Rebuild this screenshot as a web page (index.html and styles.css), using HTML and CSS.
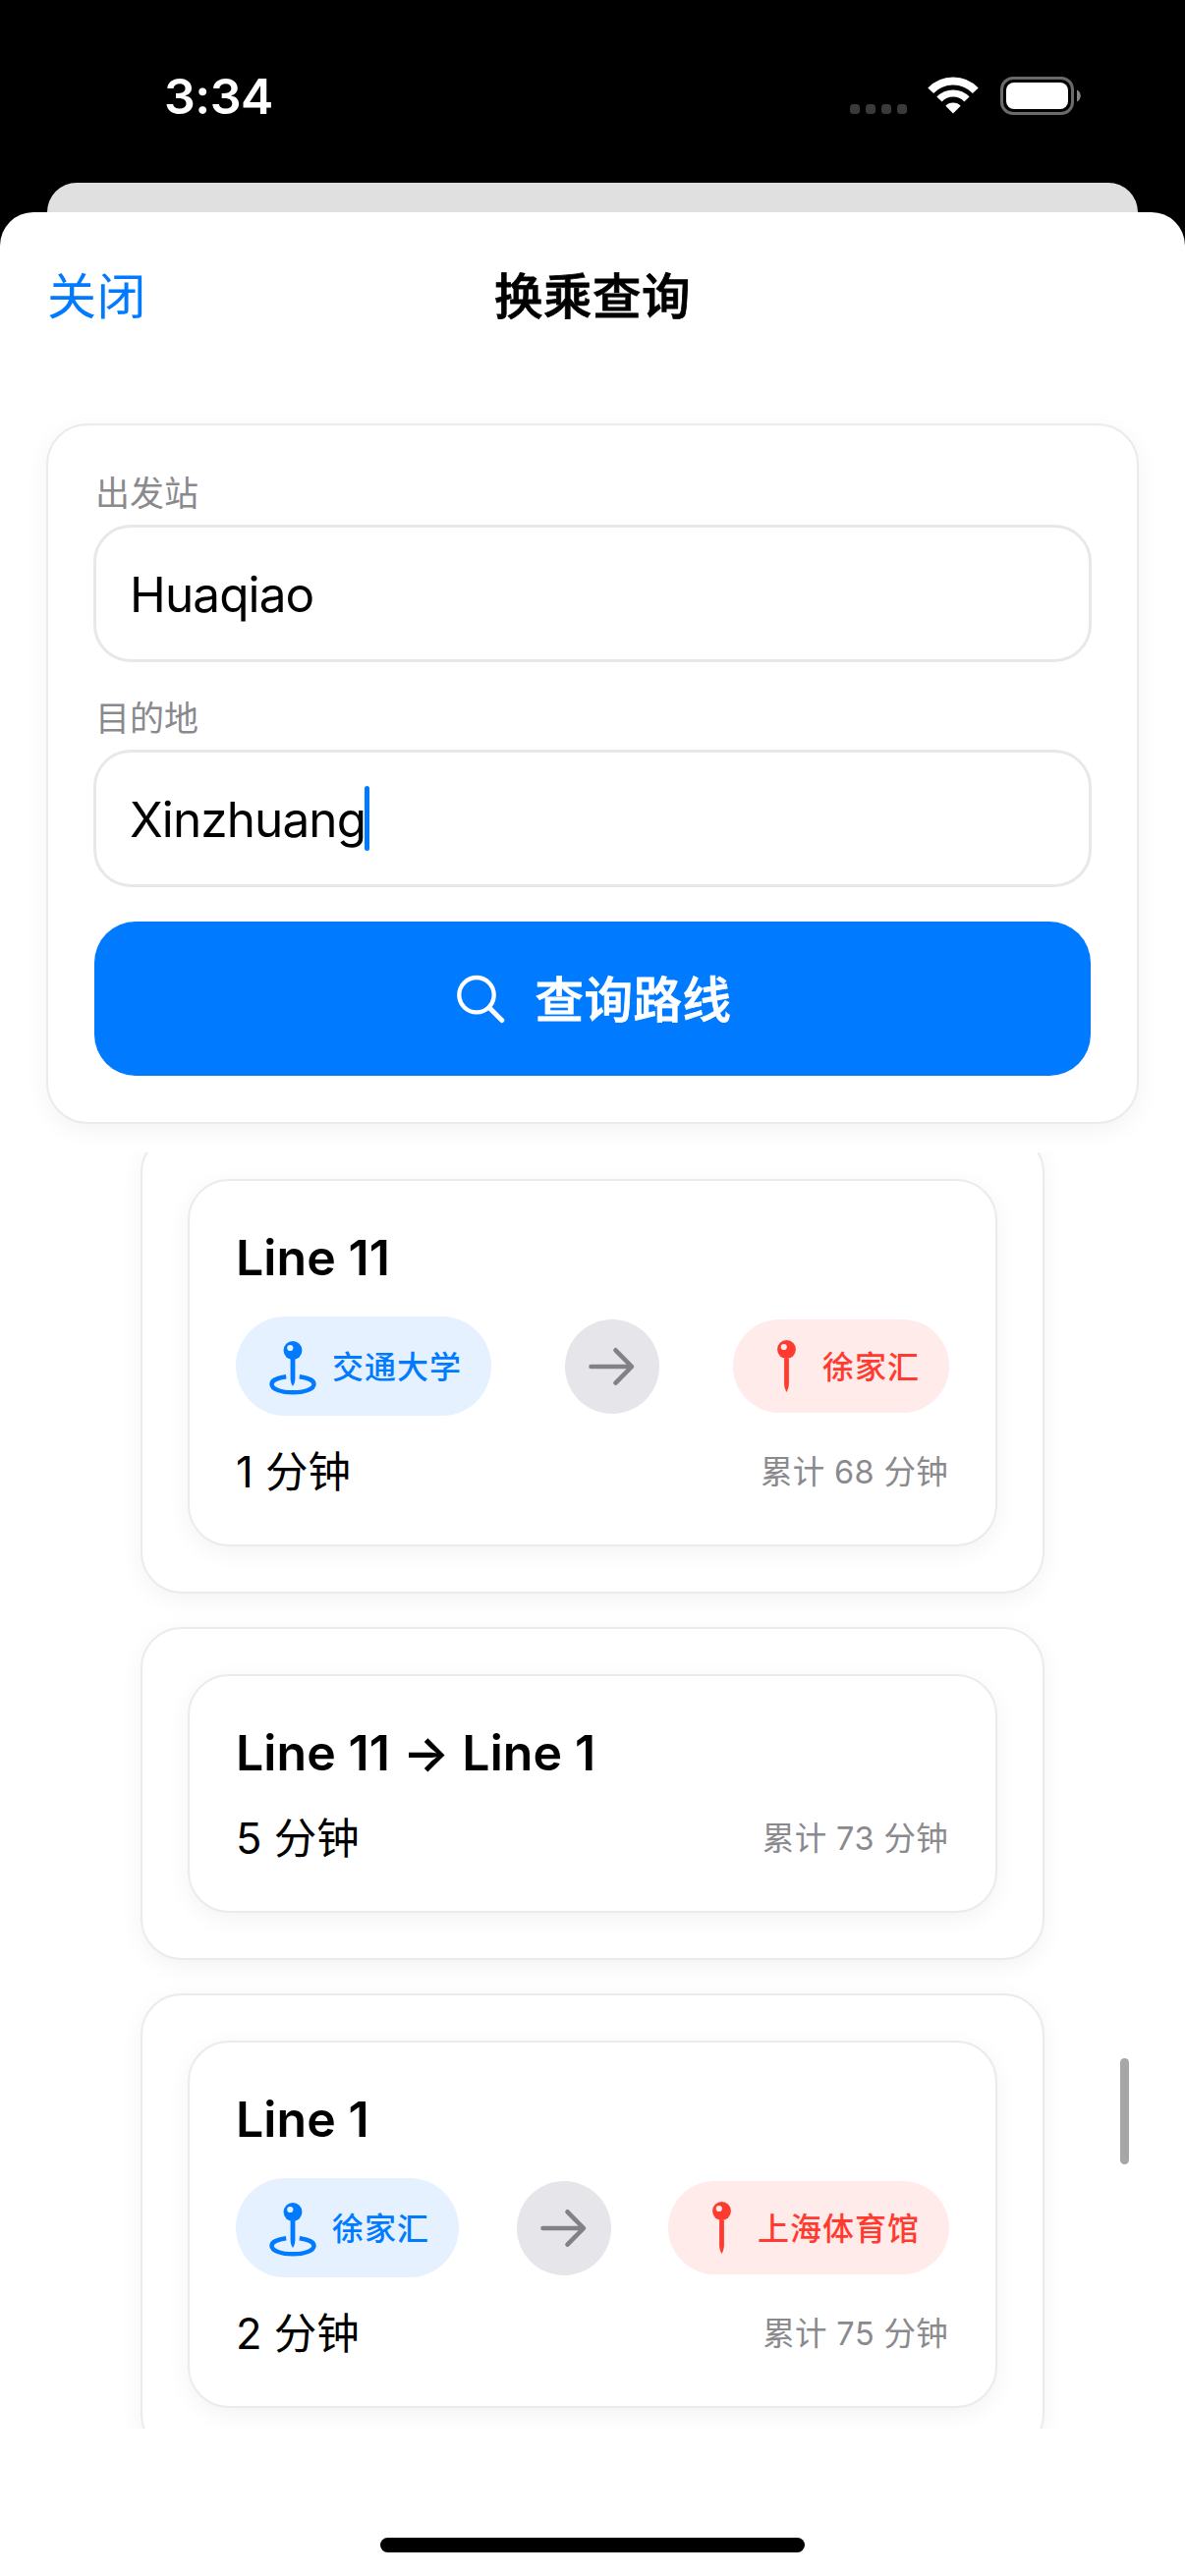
FILE: index.html
```html
<!DOCTYPE html>
<html lang="zh-CN">
<head>
<meta charset="utf-8">
<title>换乘查询</title>
<link rel="stylesheet" href="styles.css">
</head>
<body>
<svg class="defs" aria-hidden="true">
  <symbol id="pin-base" viewBox="0 0 56 56">
    <path d="M21.200 38.300C13 39.400 6.500 42.200 6.500 45.900C6.500 50.800 16.200 54.300 28 54.300S49.500 50.800 49.500 45.900C49.500 42.200 43 39.400 34.800 38.300" fill="none" stroke="currentColor" stroke-width="4.400"/>
    <path d="M25.600 19h4.800v21c0 3-1 6-2.400 8c-1.400-2-2.400-5-2.400-8z" fill="currentColor"/>
    <circle cx="28" cy="11.500" r="9.400" fill="currentColor"/>
    <circle cx="25.300" cy="9" r="3.100" fill="#e5f1ff"/>
  </symbol>
  <symbol id="pin" viewBox="0 0 49 56">
    <path d="M22.100 19.500h4.800v26c0 3-1 6-2.400 8.500c-1.400-2.500-2.400-5.500-2.400-8.500z" fill="currentColor"/>
    <circle cx="24.500" cy="10.500" r="9.400" fill="currentColor"/>
    <circle cx="21.800" cy="8" r="3.100" fill="#ffebea"/>
  </symbol>
  <symbol id="arrow" viewBox="0 0 96 96">
    <path d="M26.500 48H67M51.500 31.300L68 48L51.500 64.700" fill="none" stroke="currentColor" stroke-width="4.600" stroke-linecap="round" stroke-linejoin="round"/>
  </symbol>
</svg>

<header class="status">
  <span class="time">3:34</span>
  <div class="indicators">
    <span class="dots"><i></i><i></i><i></i><i></i></span>
    <svg class="wifi" width="52" height="38" viewBox="0 0 52 38">
      <g fill="none" stroke="#fff">
        <path d="M3.200 14.200A31.500 31.500 0 0 1 48.800 14.200" stroke-width="8"/>
        <path d="M12 23A19.300 19.300 0 0 1 40 23" stroke-width="7.200"/>
      </g>
      <path d="M26 37.500L18.300 29.700A11 11 0 0 1 33.700 29.700Z" fill="#fff"/>
    </svg>
    <svg class="battery" width="84" height="39" viewBox="0 0 84 39">
      <rect x="1.500" y="1.500" width="72" height="36" rx="11.500" fill="none" stroke="#6a6a6a" stroke-width="3"/>
      <rect x="6" y="6" width="63" height="27" rx="8" fill="#fff"/>
      <path d="M78 13.500C83 15.500 83 23.500 78 25.500Z" fill="#858585"/>
    </svg>
  </div>
</header>
<div class="backdrop"></div>

<main class="sheet">
  <nav class="nav">
    <a class="close">关闭</a>
    <h1>换乘查询</h1>
    <span></span>
  </nav>

  <form class="form">
    <label>出发站</label>
    <div class="field">Huaqiao</div>
    <label>目的地</label>
    <div class="field field-dest">Xinzhuang<i class="caret"></i></div>
    <div class="search">
      <svg width="50" height="50" viewBox="0 0 50 50"><g fill="none" stroke="#fff" stroke-width="4.300" stroke-linecap="round"><circle cx="21" cy="20.700" r="17.700"/><path d="M34.500 34.200L46.800 46.600" stroke-width="5"/></g></svg>
      <span>查询路线</span>
    </div>
  </form>

  <section class="list">
    <article class="step">
      <div class="leg">
        <h2>Line 11</h2>
        <div class="route">
          <span class="pill from"><svg width="56" height="56"><use href="#pin-base"/></svg><b>交通大学</b></span>
          <svg class="go" width="96" height="96"><use href="#arrow"/></svg>
          <span class="pill to"><svg width="49" height="56"><use href="#pin"/></svg><b>徐家汇</b></span>
        </div>
        <div class="times"><span>1 分钟</span><small>累计 68 分钟</small></div>
      </div>
    </article>
    <article class="step">
      <div class="leg">
        <h2>Line 11 → Line 1</h2>
        <div class="times"><span>5 分钟</span><small>累计 73 分钟</small></div>
      </div>
    </article>
    <article class="step">
      <div class="leg">
        <h2>Line 1</h2>
        <div class="route">
          <span class="pill from"><svg width="56" height="56"><use href="#pin-base"/></svg><b>徐家汇</b></span>
          <svg class="go" width="96" height="96"><use href="#arrow"/></svg>
          <span class="pill to"><svg width="49" height="56"><use href="#pin"/></svg><b>上海体育馆</b></span>
        </div>
        <div class="times"><span>2 分钟</span><small>累计 75 分钟</small></div>
      </div>
    </article>
    <i class="scrollbar"></i>
  </section>

  <footer class="home"><i></i></footer>
</main>
</body>
</html>
```
FILE: styles.css
```css
* { box-sizing: border-box; }
body {
  margin: 0;
  width: 1206px;
  height: 2622px;
  overflow: hidden;
  background: #000;
  color: #000;
  font-family: Inter, "Noto Sans CJK SC", sans-serif;
  display: flex;
  flex-direction: column;
}
svg { display: block; flex: none; overflow: visible; }
symbol { overflow: visible; }
.defs { width: 0; height: 0; position: absolute; }
h1, h2 { margin: 0; font-weight: 600; }

.status {
  height: 186px;
  flex: none;
  display: flex;
  justify-content: space-between;
  padding: 78px 104px 0 167px;
  color: #fff;
}
.time { font-size: 50px; font-weight: 600; line-height: 40px; letter-spacing: -0.5px; }
.indicators { display: flex; align-items: flex-start; }
.dots { display: flex; gap: 6px; padding-top: 28px; margin-right: 21px; }
.dots i { width: 10px; height: 10px; border-radius: 3.5px; background: #3a3a3a; }
.wifi { margin-right: 22px; }

.backdrop { height: 30px; flex: none; margin: 0 48px; background: #e0e0e0; border-radius: 32px 32px 0 0; }

.sheet {
  height: 2406px;
  flex: none;
  background: #fff;
  border-radius: 34px 34px 0 0;
  display: flex;
  flex-direction: column;
}
.nav {
  height: 168px;
  flex: none;
  display: grid;
  grid-template-columns: 1fr auto 1fr;
  align-items: center;
  padding: 0 48px 4px;
}
.close { color: #007aff; font-size: 50px; letter-spacing: 0.5px; }
.nav h1 { font-size: 49.5px; font-weight: 500; letter-spacing: 0.5px; -webkit-text-stroke: 0.8px currentColor; }

.form, .step, .leg {
  background: #fff;
  border: 2px solid #ebebeb;
  border-radius: 42px;
  box-shadow: 0 6px 24px rgba(0, 0, 0, .05);
}
.form {
  height: 713px;
  flex: none;
  margin: 47px 47px 0;
  padding: 48px 46px 0;
  display: flex;
  flex-direction: column;
}
.form label {
  height: 42px;
  line-height: 42px;
  margin: 0 0 11px 2px;
  font-size: 35px;
  color: #8a8a8e;
}
.field {
  height: 140px;
  border: 3px solid #e8e8e8;
  border-radius: 38px;
  padding: 2px 34px 0;
  display: flex;
  align-items: center;
  font-size: 49.5px;
  letter-spacing: -0.9px;
  margin-bottom: 36px;
}
.field-dest { margin-bottom: 35px; }
.caret { flex: none; width: 5px; height: 66px; margin: -2px 0 0 -1px; border-radius: 3px; background: #007aff; }
.search {
  height: 157px;
  margin: 0 1px;
  padding-left: 2px;
  border-radius: 42px;
  background: #007aff;
  color: #fff;
  font-size: 49.5px;
  font-weight: 500;
  letter-spacing: 0.5px;
  display: flex;
  align-items: center;
  justify-content: center;
  gap: 31px;
}
.search span { margin-top: -4px; -webkit-text-stroke: 0.8px currentColor; }

.list {
  position: relative;
  margin-top: 29px;
  height: 1299px;
  flex: none;
  overflow: hidden;
  padding: 0 143px;
  display: flex;
  flex-direction: column;
  gap: 34px;
}
.step { flex: none; padding: 46px; }
.step:first-child { margin-top: -21px; }
.leg { padding: 47px; display: flex; flex-direction: column; gap: 30px; }
.leg h2 { font-size: 50px; line-height: 63px; margin-bottom: -2px; letter-spacing: 0.1px; font-kerning: none; }
.route { display: flex; justify-content: space-between; align-items: center; height: 101px; }
.pill {
  display: flex;
  align-items: center;
  gap: 12px;
  padding: 0 30px;
  font-size: 32px;
  letter-spacing: 1px;
}
.pill b { font-weight: 500; margin-top: -4px; }
.from { height: 101px; border-radius: 51px; background: #e5f1ff; color: #007aff; }
.to { height: 95px; border-radius: 48px; background: #ffebea; color: #ff3b30; }
.go { border-radius: 50%; background: #e5e5ea; color: #818186; }
.times {
  display: flex;
  justify-content: space-between;
  align-items: center;
  height: 54px;
  padding-right: 1px;
  line-height: 55px;
  font-size: 43.5px;
  font-kerning: none;
}
.times small { font-size: 32.5px; color: #8a8a8e; letter-spacing: 0.3px; }

.scrollbar { position: absolute; left: 1140px; top: 922px; width: 9px; height: 108px; border-radius: 5px; background: #a6a6a6; }

.home { flex: 1; display: flex; justify-content: center; align-items: flex-end; padding-bottom: 24px; }
.home i { width: 432px; height: 15px; border-radius: 8px; background: #000; }
```
